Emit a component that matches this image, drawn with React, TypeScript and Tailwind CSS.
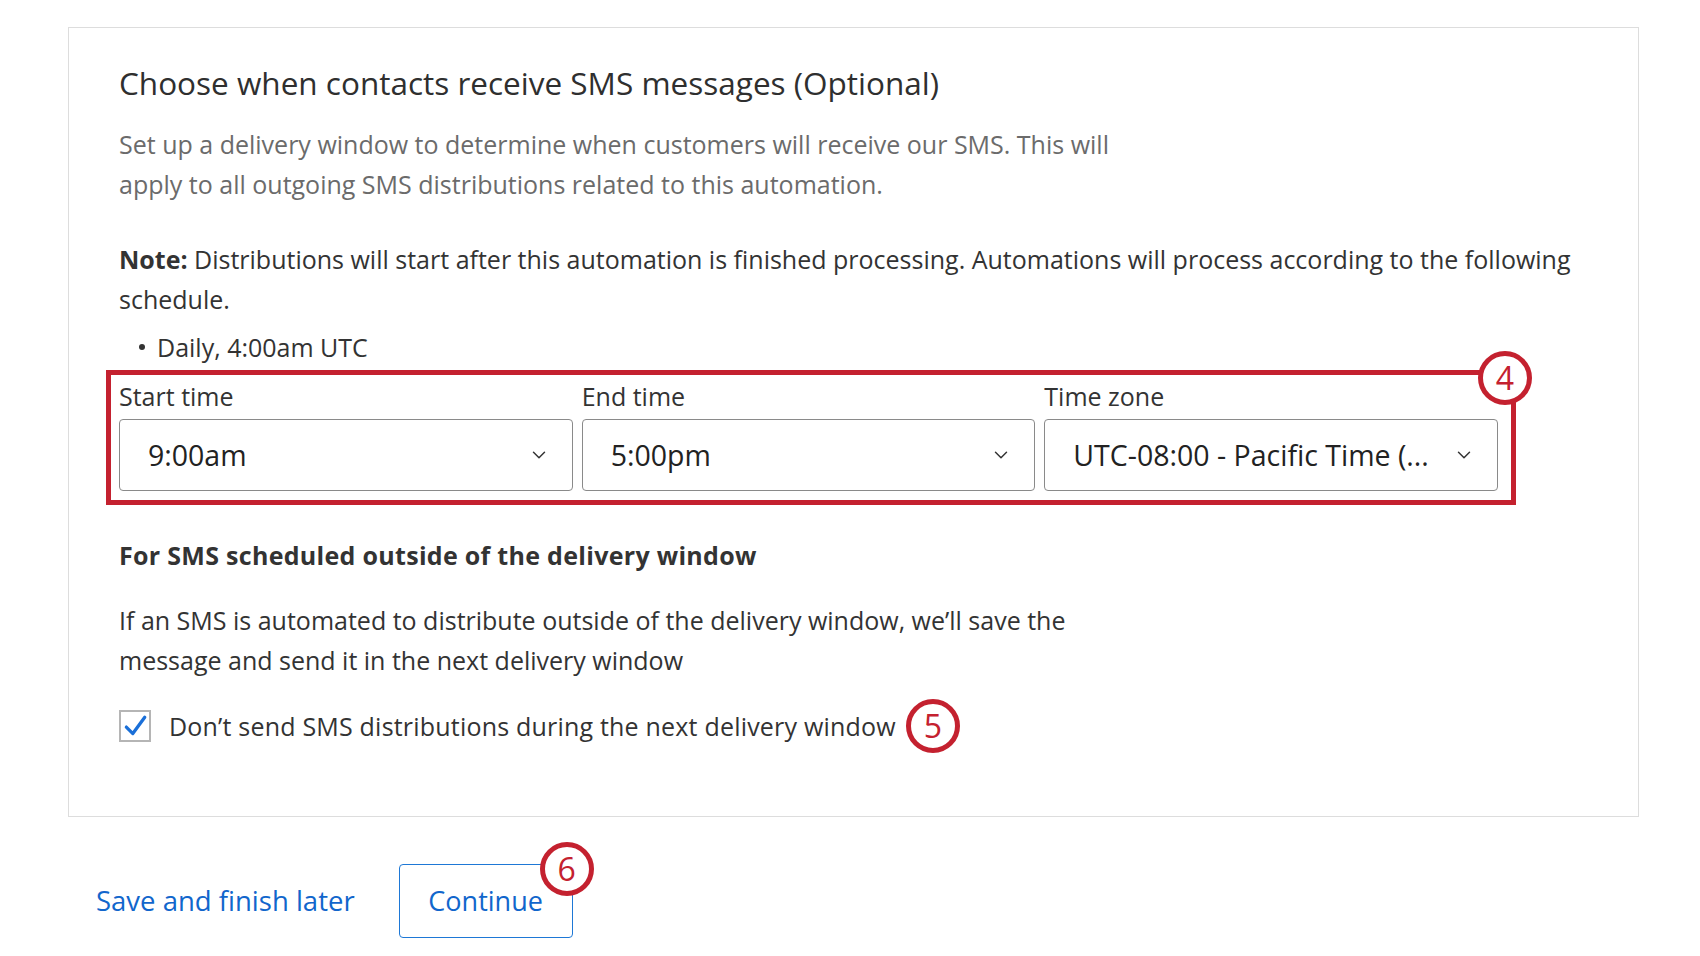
import { ChevronDown } from 'lucide-react';

const font = { fontFamily: '"Open Sans", "Noto Sans", Arial, sans-serif' };

function Marker({ n, className }: { n: string; className: string }) {
  return (
    <span
      className={`absolute flex h-[54px] w-[54px] items-center justify-center rounded-full border-[5px] border-[#c4212f] bg-white text-[32px] leading-none text-[#c4212f] ${className}`}
    >
      {n}
    </span>
  );
}

function SelectBox({ value }: { value: string }) {
  return (
    <div className="flex h-[72px] items-center justify-between rounded-[4px] border border-[#8a8a8a] bg-white pl-[28px] pr-[22px]">
      <span className="truncate text-[28.5px] text-[#222]">{value}</span>
      <ChevronDown className="ml-3 h-[22px] w-[22px] shrink-0 text-[#333]" strokeWidth={1.6} />
    </div>
  );
}

export default function App() {
  const fields = [
    { label: 'Start time', value: '9:00am' },
    { label: 'End time', value: '5:00pm' },
    { label: 'Time zone', value: 'UTC-08:00 - Pacific Time (...' },
  ];

  return (
    <div className="h-[956px] w-full bg-white pt-[27px]" style={font}>
      <div className="ml-[68px] h-[790px] w-[1571px] border border-[#dddddd] pl-[50px] pr-[36px] pt-[37px]">
        <h2 className="text-[31.5px] leading-[36px] text-[#2f2f2f]">
          Choose when contacts receive SMS messages (Optional)
        </h2>
        <p className="mt-[23px] text-[25px] leading-[40px] text-[#6b6b6b]">
          Set up a delivery window to determine when customers will receive our SMS. This will
          <br />
          apply to all outgoing SMS distributions related to this automation.
        </p>
        <p className="mt-[35px] text-[25px] leading-[40px] text-[#333]">
          <span className="font-bold">Note: </span>
          Distributions will start after this automation is finished processing. Automations will
          process according to the following schedule.
        </p>
        <ul className="mt-[11px] pl-[20px] text-[25px] leading-[34px] text-[#333]">
          <li className="flex items-center gap-[12px]">
            <span className="h-[6px] w-[6px] rounded-full bg-[#333]" />
            Daily, 4:00am UTC
          </li>
        </ul>

        <div className="relative mt-[6px] ml-[-13px] w-[1410px] border-[5px] border-[#c4212f] pb-[9px] pl-[8px] pr-[13px] pt-[7px]">
          <div className="grid grid-cols-3 gap-[9px]">
            {fields.map((f) => (
              <div key={f.label}>
                <div className="mb-[9px] text-[25px] leading-[28px] text-[#333]">{f.label}</div>
                <SelectBox value={f.value} />
              </div>
            ))}
          </div>
          <Marker n="4" className="right-[-21px] top-[-24px]" />
        </div>

        <h3 className="mt-[34px] text-[25px] font-bold leading-[32px] tracking-[0.3px] text-[#333]">
          For SMS scheduled outside of the delivery window
        </h3>
        <p className="mt-[29px] text-[25px] leading-[40px] text-[#333]">
          If an SMS is automated to distribute outside of the delivery window, we’ll save the
          <br />
          message and send it in the next delivery window
        </p>
        <div className="mt-[19px] flex items-center gap-[18px]">
          <span className="flex h-[32px] w-[32px] items-center justify-center border-2 border-[#b5b5b5] bg-white">
            <svg viewBox="0 0 24 24" className="h-[26px] w-[26px]" fill="none">
              <path d="M4 13 L10 19 L21 4" stroke="#1a6fd8" strokeWidth="3" strokeLinecap="round" strokeLinejoin="round" />
            </svg>
          </span>
          <span className="text-[25px] leading-[32px] tracking-[0.2px] text-[#333]">
            Don’t send SMS distributions during the next delivery window
          </span>
          <span className="relative h-[54px] w-[54px]">
            <Marker n="5" className="left-[-8px] top-0" />
          </span>
        </div>
      </div>

      <div className="ml-[96px] mt-[47px] flex items-center gap-[44px]">
        <a className="text-[27.5px] text-[#1166cc]">Save and finish later</a>
        <div className="relative">
          <button className="h-[74px] w-[174px] rounded-[4px] border border-[#1e78d6] bg-white text-[27px] text-[#1166cc]">
            Continue
          </button>
          <Marker n="6" className="right-[-21px] top-[-22px]" />
        </div>
      </div>
    </div>
  );
}
